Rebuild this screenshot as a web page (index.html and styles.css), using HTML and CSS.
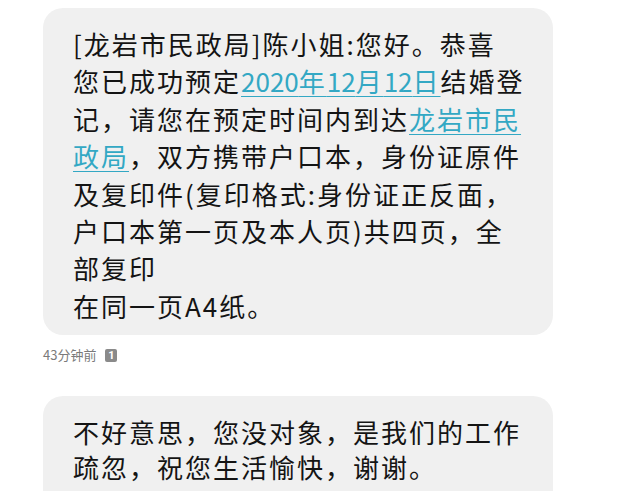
FILE: index.html
```html
<!DOCTYPE html>
<html lang="zh-CN">
<head>
<meta charset="utf-8">
<link rel="stylesheet" href="styles.css">
</head>
<body>
<div class="thread">
  <div class="bubble first">
    <div class="line">[龙岩市民政局]陈小姐:您好。恭喜</div>
    <div class="line">您已成功预定<a class="link"><span class="num">2020</span>年<span class="num">12</span>月<span class="num">12</span>日</a>结婚登</div>
    <div class="line">记，请您在预定时间内到达<a class="link">龙岩市民</a></div>
    <div class="line"><a class="link">政局</a>，双方携带户口本，身份证原件</div>
    <div class="line">及复印件(复印格式:身份证正反面，</div>
    <div class="line">户口本第一页及本人页)共四页，全</div>
    <div class="line">部复印</div>
    <div class="line">在同一页A4纸。</div>
  </div>
  <div class="meta">
    <span class="time">43分钟前</span>
    <span class="sim">1</span>
  </div>
  <div class="bubble second">
    <div class="line">不好意思，您没对象，是我们的工作</div>
    <div class="line">疏忽，祝您生活愉快，谢谢。</div>
  </div>
</div>
</body>
</html>
```
FILE: styles.css
```css
html, body {
  margin: 0;
  padding: 0;
  background: #ffffff;
  overflow: hidden;
}
body {
  width: 640px;
  height: 491px;
  font-family: "Noto Sans CJK SC", "Noto Sans", sans-serif;
}
.thread {
  padding-left: 43px;
  padding-top: 8px;
}
.bubble {
  width: 510px;
  box-sizing: border-box;
  background: #f0f0f0;
  border-radius: 20px;
  color: #141414;
  font-size: 26px;
  letter-spacing: 2px;
}
.bubble.first {
  padding: 17px 20px 11px 30px;
  line-height: 37.4px;
}
.bubble.second {
  margin-top: 33px;
  padding: 18px 20px 30px 30px;
  line-height: 35px;
}
.line {
  white-space: nowrap;
}
.num {
  letter-spacing: 0;
}
.link {
  color: #33a8c4;
  text-decoration: underline;
  text-decoration-thickness: 1px;
  text-underline-offset: 4px;
}
.meta {
  margin-top: 12px;
  height: 16px;
  display: flex;
  align-items: center;
  gap: 9px;
}
.time {
  font-size: 13px;
  color: #7a7a7a;
  line-height: 16px;
}
.sim {
  width: 12px;
  height: 13px;
  border-radius: 2px;
  background: #8a8a8a;
  color: #ffffff;
  font-family: "Roboto", sans-serif;
  font-weight: 700;
  font-size: 11px;
  line-height: 13px;
  text-align: center;
}
```
